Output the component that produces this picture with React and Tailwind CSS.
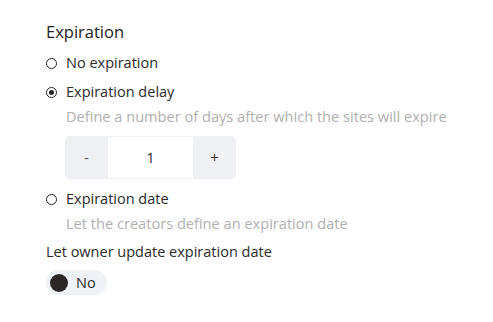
import React, { useState } from "react";

const Radio = ({ checked }) => (
  <span className="w-[11px] h-[11px] rounded-full border-[1.5px] border-[#222] flex items-center justify-center shrink-0">
    {checked && <span className="w-[5px] h-[5px] rounded-full bg-[#222]" />}
  </span>
);

const Option = ({ label, checked, hint, children }) => (
  <div className="flex flex-col">
    <div className="flex items-center gap-[9px] h-[22px]">
      <Radio checked={checked} />
      <span className="text-[14.5px] text-[#2a2a2a]">{label}</span>
    </div>
    {hint && (
      <div className="pl-[20px] mt-[2px] text-[14.6px] text-[#b0b0b0] leading-[22px]">
        {hint}
      </div>
    )}
    {children}
  </div>
);

export default function App() {
  const [days, setDays] = useState(1);
  return (
    <div
      className="bg-white w-[493px] h-[322px] pl-[46px] pt-[20px] text-[#222]"
      style={{ fontFamily: "'Open Sans', 'Noto Sans', sans-serif" }}
    >
      <h2 className="text-[16.5px] leading-[24px] text-[#222]">Expiration</h2>
      <div className="mt-[8px] flex flex-col gap-[7px]">
        <Option label="No expiration" />
        <Option
          label="Expiration delay"
          checked
          hint="Define a number of days after which the sites will expire"
        >
          <div className="ml-[19px] mt-[9px] mb-[2px] flex w-[171px] h-[43px] rounded-[5px] bg-[#eef0f4] overflow-hidden">
            <button
              className="w-[43px] text-[15px] text-[#555]"
              onClick={() => setDays(Math.max(1, days - 1))}
            >
              -
            </button>
            <div className="flex-1 bg-white my-[1px] flex items-center justify-center text-[15px] text-[#333]">
              {days}
            </div>
            <button
              className="w-[43px] text-[15px] text-[#333]"
              onClick={() => setDays(days + 1)}
            >
              +
            </button>
          </div>
        </Option>
        <Option
          label="Expiration date"
          hint="Let the creators define an expiration date"
        />
      </div>
      <div className="mt-[7px] text-[14.5px] leading-[22px] text-[#2a2a2a]">
        Let owner update expiration date
      </div>
      <div className="mt-[7px] inline-flex items-center gap-[8px] h-[25px] pl-[4px] pr-[11px] rounded-full bg-[#eef1f5]">
        <span className="w-[18px] h-[18px] rounded-full bg-[#2b2727]" />
        <span className="text-[14.5px] text-[#2a2a2a]">No</span>
      </div>
    </div>
  );
}
